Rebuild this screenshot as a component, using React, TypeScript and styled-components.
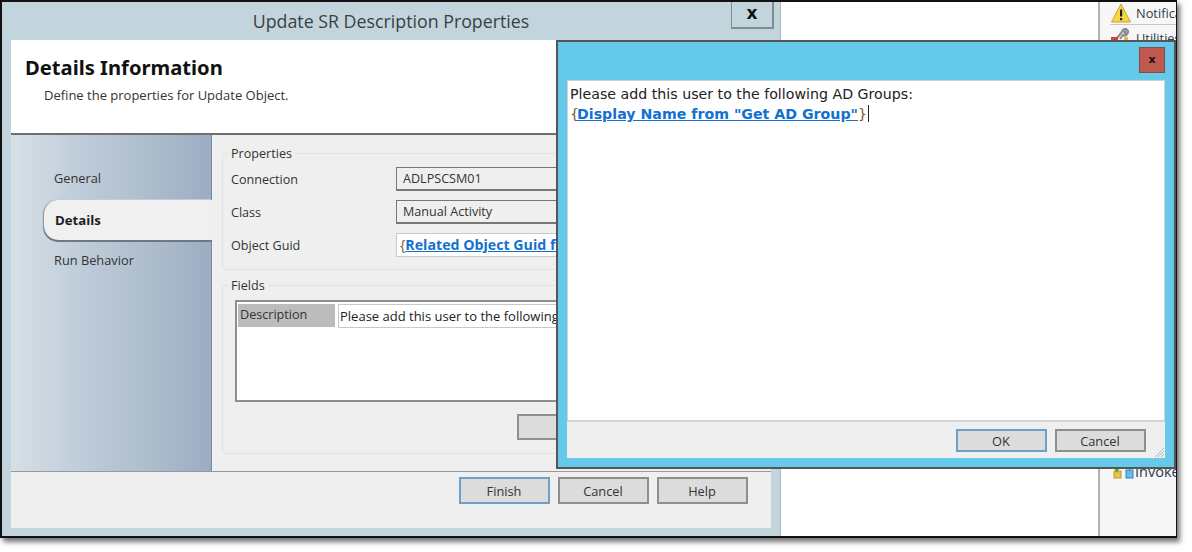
import React from "react";
import styled, { createGlobalStyle } from "styled-components";

const Global = createGlobalStyle`
  html, body { margin: 0; padding: 0; background: #fff; width: 1192px; height: 552px; overflow: hidden; }
  * { box-sizing: border-box; }
`;
const uiFont = `"Open Sans", "Noto Sans", "Liberation Sans", sans-serif`;
const wideFont = `"DejaVu Sans", "Liberation Sans", sans-serif`;

const Frame = styled.div`
  position: relative; display: flex; width: 1177px; height: 538px;
  border: 2px solid #111; border-right-width: 1px; background: #fff;
  box-shadow: 3px 4px 5px rgba(0,0,0,.55); font-family: ${uiFont}; color: #2f2f2f;
  overflow: visible;
`;
const Window = styled.div`
  width: 779px; flex: none; display: flex; flex-direction: column; background: #c2d5dc;
  border-right: 1px solid #a9b9c0;
`;
const TitleBar = styled.div`
  position: relative; height: 38px; flex: none; display: flex; align-items: center; justify-content: center;
  font-size: 17.8px; color: #3b3f44;
`;
const CloseX = styled.div`
  position: absolute; right: 6px; top: 0; width: 43px; height: 27px; border: 1px solid #7f8c92; border-top: 0;
  border-bottom-width: 2px; border-right-width: 2px;
  display: flex; align-items: center; justify-content: center; font: bold 17px ${wideFont}; color: #111; padding-bottom: 3px;
`;
const WindowBody = styled.div`
  flex: 1; margin: 0 9px 8px 9px; display: flex; flex-direction: column; background: #efefef; min-height: 0;
`;
const Header = styled.div`
  height: 95px; flex: none; background: #fff; border-bottom: 2px solid #6f6f6f; padding: 14px 14px 0;
`;
const HeaderTitle = styled.div`
  font: bold 20.2px/26px "Noto Sans", ${uiFont}; color: #111;
`;
const HeaderSub = styled.div`
  font-size: 13px; line-height: 16px; margin: 7px 0 0 19px; color: #333;
`;
const Middle = styled.div`
  flex: 1; display: flex; min-height: 0; border-bottom: 1px solid #999;
`;
const Sidebar = styled.div`
  width: 201px; flex: none; padding: 28px 0 0 32px; display: flex; flex-direction: column;
  background: linear-gradient(90deg, #d6e0e7 0%, #bfccd9 35%, #adbdcd 70%, #9badc2 100%);
  border-right: 1px solid #7e8a99;
`;
const Tab = styled.div<{ $active?: boolean }>`
  height: 40px; margin-right: -1px; padding-left: 11px; display: flex; align-items: center; font-size: 12.8px; color: #333;
  margin-top: ${(p) => (p.$active ? "1px" : "0")};
  ${(p) => p.$active && `
    font-size: 13.2px; font-weight: 700; color: #1b2128; background: #f0f0f0; border-radius: 15px 0 0 15px;
    border-left: 1px solid #8d98a4; box-shadow: 0 2px 0 #6e7782, -1px -1px 0 #c4ccd4; z-index: 1;
  `}
  &:first-child { height: 30px; margin-top: 0; margin-bottom: 6px; }
`;
const Main = styled.div`
  flex: 1; padding: 18px 0 16px 10px; display: flex; flex-direction: column; gap: 15px;
`;
const Group = styled.div<{ $h: number }>`
  position: relative; height: ${(p) => p.$h}px; border: 1px solid #dde3e8; border-radius: 4px; background: #efefef;
  margin-right: 2px; padding: 13px 8px 0 8px;
`;
const Legend = styled.div`
  position: absolute; top: -8px; left: 5px; padding: 0 3px; background: #efefef; font-size: 12.6px; line-height: 16px; color: #333;
`;
const FormRow = styled.div`
  display: flex; align-items: center; height: 24px; margin-bottom: 9px; font-size: 12.6px;
`;
const FormLabel = styled.div`
  width: 165px; flex: none; color: #333; padding-top: 1px;
`;
const Combo = styled.div`
  flex: 1; height: 24px; border: 1px solid #777; border-width: 1px 1px 2px 1px; background: #efefef; padding-left: 6px;
  display: flex; align-items: center; color: #333;
`;
const GuidInput = styled(Combo)`
  background: #fff; border-color: #c9c9c9; border-width: 1px; white-space: nowrap; overflow: hidden; padding: 0 0 1px 3px;
  font-size: 14.2px;
`;
const Brace = styled.span`
  color: #7a5a30; font-weight: 400;
`;
const Token = styled.span`
  color: #1470cf; font-weight: 700; text-decoration: underline;
`;
const EditorToken = styled(Token)`
  margin-left: -2px;
`;
const Table = styled.div`
  height: 102px; margin-top: 1px; margin-left: 4px; margin-right: 2px; border: 2px solid #8e8e8e; background: #fff; padding: 2px 1px; display: flex; gap: 3px; align-items: flex-start;
`;
const DescCell = styled.div`
  width: 97px; height: 23px; flex: none; background: #bcbcbc; padding-left: 2px; font-size: 12.6px; line-height: 21px; color: #333;
`;
const DescValue = styled.div`
  flex: 1; height: 24px; border: 1px solid #c9c9c9; padding-left: 1px; font-size: 13px; line-height: 23px; white-space: nowrap; overflow: hidden; color: #222;
`;
const GroupActions = styled.div`
  display: flex; margin-top: 12px; padding-left: 286px;
`;
const Footer = styled.div`
  flex: none; height: 56px; display: flex; justify-content: flex-end; gap: 8px; padding: 5px 23px 0 0; align-items: flex-start;
`;
const Button = styled.div<{ $primary?: boolean; $w?: number; $h?: number }>`
  width: ${(p) => p.$w ?? 91}px; height: ${(p) => p.$h ?? 27}px; flex: none; background: #dcdcdc;
  border: 2px solid ${(p) => (p.$primary ? "#6f9fc6" : "#8f8f8f")};
  display: flex; align-items: center; justify-content: center; font-size: 12.8px; color: #333; padding-right: 1px;
`;
const RightArea = styled.div`
  flex: 1; display: flex; justify-content: flex-end; min-width: 0; overflow: hidden;
`;
const Side = styled.div`
  width: 78px; flex: none; background: #f7f7f7; border-left: 2px solid #b3b3b3; padding: 0 0 0 11px; display: flex; flex-direction: column; overflow: hidden;
`;
const SideItem = styled.div`
  display: flex; align-items: center; gap: 5px; height: 22px; font-size: 12.8px; color: #2c3a4c; white-space: nowrap; flex: none;
  & svg { flex: none; }
`;
const SideRule = styled.div`
  height: 1px; background: #c9c9c9; margin: 0 0 2px; flex: none; margin-left: -1px;
`;
const Spacer = styled.div`
  flex: 1;
`;
const InvokeItem = styled(SideItem)`
  margin: 0 0 54px 2px; gap: 1px; font-size: 14.5px;
`;
const Dialog = styled.div`
  position: absolute; left: 554px; top: 38px; width: 620px; height: 429px; background: #65c9ea; border: 2px solid #555;
  padding: 0 9px 9px 9px; display: flex; flex-direction: column; z-index: 5;
`;
const DialogTop = styled.div`
  height: 38px; flex: none; display: flex; justify-content: flex-end; padding: 5px 0 0 0;
`;
const DialogClose = styled.div`
  width: 26px; height: 26px; background: #c0584f; border: 1px solid #7a5048; display: flex; align-items: center; justify-content: center;
  font: bold 11px ${wideFont}; color: #111; padding-bottom: 2px;
`;
const Editor = styled.div`
  flex: 1; background: #fff; border: 1px solid #cfd3d6; border-width: 1px 1px 2px 1px; margin: 0; padding: 3px 0 0 2px;
  font: 14.2px/20px ${wideFont}; color: #222;
`;
const Caret = styled.span`
  display: inline-block; width: 1px; height: 17px; background: #222; vertical-align: -3px; margin-left: 1px;
`;
const DialogFooter = styled.div`
  position: relative; height: 36px; flex: none; background: #efefef; display: flex; justify-content: flex-end; gap: 8px; padding: 7px 19px 0 0;
`;
const Grip = styled.svg`
  position: absolute; right: 0; bottom: 0;
`;

export default function App() {
  return (
    <>
      <Global />
      <Frame>
        <Window>
          <TitleBar>
            Update SR Description Properties
            <CloseX>x</CloseX>
          </TitleBar>
          <WindowBody>
            <Header>
              <HeaderTitle>Details Information</HeaderTitle>
              <HeaderSub>Define the properties for Update Object.</HeaderSub>
            </Header>
            <Middle>
              <Sidebar>
                <Tab>General</Tab>
                <Tab $active>Details</Tab>
                <Tab>Run Behavior</Tab>
              </Sidebar>
              <Main>
                <Group $h={117}>
                  <Legend>Properties</Legend>
                  <FormRow>
                    <FormLabel>Connection</FormLabel>
                    <Combo>ADLPSCSM01</Combo>
                  </FormRow>
                  <FormRow>
                    <FormLabel>Class</FormLabel>
                    <Combo>Manual Activity</Combo>
                  </FormRow>
                  <FormRow>
                    <FormLabel>Object Guid</FormLabel>
                    <GuidInput>
                      <Brace>{"{"}</Brace>
                      <Token>Related Object Guid from "Runbook"</Token>
                      <Brace>{"}"}</Brace>
                    </GuidInput>
                  </FormRow>
                </Group>
                <Group $h={169}>
                  <Legend>Fields</Legend>
                  <Table>
                    <DescCell>Description</DescCell>
                    <DescValue>Please add this user to the following AD Groups:</DescValue>
                  </Table>
                  <GroupActions>
                    <Button $w={150} $h={26}>Add</Button>
                  </GroupActions>
                </Group>
              </Main>
            </Middle>
            <Footer>
              <Button $primary>Finish</Button>
              <Button>Cancel</Button>
              <Button>Help</Button>
            </Footer>
          </WindowBody>
        </Window>
        <RightArea>
          <Side>
            <SideItem>
              <svg width="20" height="20" viewBox="0 0 20 20">
                <path d="M10 1 L19.5 19 H0.5 Z" fill="#f6d743" stroke="#c9a227" strokeWidth="1" strokeLinejoin="round" />
                <rect x="9" y="6.5" width="2.2" height="7" fill="#222" />
                <rect x="9" y="15" width="2.2" height="2.2" fill="#222" />
              </svg>
              Notifications
            </SideItem>
            <SideRule />
            <SideItem>
              <svg width="20" height="20" viewBox="0 0 20 20">
                <path d="M6 10 L11 4 M11 4 C11 1 15 0 16 2 L13 4 L15 6 L17 4 C17 7 14 8 12 7 L9 11" fill="none" stroke="#8a8a8a" strokeWidth="2" />
                <rect x="0" y="9" width="7" height="6" fill="#c8473d" />
                <rect x="13" y="9" width="4" height="6" fill="#e8b93a" />
              </svg>
              Utilities
            </SideItem>
            <Spacer />
            <InvokeItem>
              <svg width="21" height="18" viewBox="0 0 21 18">
                <rect x="1" y="9" width="7" height="7" fill="#eec04e" stroke="#c8962a" />
                <path d="M2 6 L4 9 L7 2" fill="none" stroke="#4aa84a" strokeWidth="2" />
                <rect x="13" y="8" width="7" height="8" fill="#6fb8e6" stroke="#2a86c8" />
                <path d="M16.5 8 V4" stroke="#2a86c8" strokeWidth="1" />
              </svg>
              Invoke
            </InvokeItem>
          </Side>
        </RightArea>
        <Dialog>
          <DialogTop>
            <DialogClose>x</DialogClose>
          </DialogTop>
          <Editor>
            Please add this user to the following AD Groups:
            <br />
            <Brace>{"{"}</Brace>
            <EditorToken>Display Name from "Get AD Group"</EditorToken>
            <Brace>{"}"}</Brace>
            <Caret />
          </Editor>
          <DialogFooter>
            <Button $primary $h={23}>OK</Button>
            <Button $h={23}>Cancel</Button>
            <Grip width="11" height="11" viewBox="0 0 11 11">
              <path d="M1 10 L10 1 M4 10 L10 4 M7 10 L10 7" stroke="#b5b5b5" strokeWidth="1" />
            </Grip>
          </DialogFooter>
        </Dialog>
      </Frame>
    </>
  );
}
